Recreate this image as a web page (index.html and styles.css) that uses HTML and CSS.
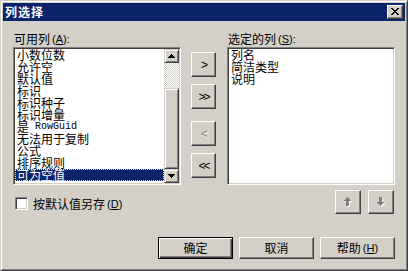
FILE: index.html
```html
<!DOCTYPE html>
<html lang="zh-CN">
<head>
    <meta charset="UTF-8">
    <title>列选择</title>
    <link rel="stylesheet" href="styles.css">
</head>
<body>
    <div class="window">
        <div class="titlebar">
            <span class="title">列选择</span>
            <button class="close-btn" aria-label="关闭">
                <svg width="8" height="7" viewBox="0 0 8 7" shape-rendering="crispEdges"><path d="M0 0h2v1H0zM6 0h2v1H6zM1 1h2v1H1zM5 1h2v1H5zM2 2h4v1H2zM3 3h2v1H3zM2 4h4v1H2zM1 5h2v1H1zM5 5h2v1H5zM0 6h2v1H0zM6 6h2v1H6z"/></svg>
            </button>
        </div>

        <div class="dialog-body">
            <div class="columns">
                <div class="list-col">
                    <div class="field-label">可用列<span class="mnemonic">(<u>A</u>):</span></div>
                    <div class="listbox">
                        <ul class="items">
                            <li>小数位数</li>
                            <li>允许空</li>
                            <li>默认值</li>
                            <li>标识</li>
                            <li>标识种子</li>
                            <li>标识增量</li>
                            <li><span>是</span><span class="latin">RowGuid</span></li>
                            <li>无法用于复制</li>
                            <li>公式</li>
                            <li>排序规则</li>
                            <li class="selected">可为空值</li>
                        </ul>
                        <div class="scrollbar">
                            <div class="sb-btn">
                                <svg width="7" height="4" viewBox="0 0 7 4" shape-rendering="crispEdges"><path d="M3 0h1v1h1v1h1v1h1v1H0V3h1V2h1V1h1z"/></svg>
                            </div>
                            <div class="sb-track"><div class="sb-thumb"></div></div>
                            <div class="sb-btn">
                                <svg width="7" height="4" viewBox="0 0 7 4" shape-rendering="crispEdges"><path d="M0 0h7v1H6v1H5v1H4v1H3V3H2V2H1V1H0z"/></svg>
                            </div>
                        </div>
                    </div>
                </div>

                <div class="move-col">
                    <button class="btn move">&gt;</button>
                    <button class="btn move">&gt;&gt;</button>
                    <button class="btn move" disabled>&lt;</button>
                    <button class="btn move">&lt;&lt;</button>
                </div>

                <div class="list-col">
                    <div class="field-label">选定的列<span class="mnemonic">(<u>S</u>):</span></div>
                    <div class="listbox">
                        <ul class="items">
                            <li>列名</li>
                            <li>简洁类型</li>
                            <li>说明</li>
                        </ul>
                    </div>
                </div>
            </div>

            <div class="options">
                <label class="check">
                    <span class="check-box"></span>
                    <span>按默认值另存</span><span class="mnemonic">(<u>D</u>)</span>
                </label>
                <div class="order-btns">
                    <button class="btn order" disabled>
                        <svg width="8" height="10" viewBox="0 0 8 10" shape-rendering="crispEdges">
                            <path fill="#fff" d="M4 1h1v1h1v1h1v1h1v1H6v5H3V5H1V4h1V3h1V2h1z"/>
                            <path fill="#808080" d="M3 0h1v1h1v1h1v1h1v1H5v5H2V4H0V3h1V2h1V1h1z"/>
                        </svg>
                    </button>
                    <button class="btn order" disabled>
                        <svg width="8" height="10" viewBox="0 0 8 10" shape-rendering="crispEdges">
                            <path fill="#fff" d="M3 1h3v5h2v1H7v1H6v1H5v1H4V9H3V8H2V7H1V6h2z"/>
                            <path fill="#808080" d="M2 0h3v5h2v1H6v1H5v1H4v1H3V8H2V7H1V6H0V5h2z"/>
                        </svg>
                    </button>
                </div>
            </div>

            <div class="footer">
                <button class="btn push default">确定</button>
                <button class="btn push">取消</button>
                <button class="btn push">帮助<span class="mnemonic">(<u>H</u>)</span></button>
            </div>
        </div>
    </div>
</body>
</html>
```

FILE: styles.css
```css
* {
    box-sizing: border-box;
}
body {
    margin: 0;
    font-family: "Noto Sans CJK SC", "Liberation Sans", sans-serif;
    font-size: 12px;
    line-height: 12px;
    color: #000;
    background: #d4d0c8;
}
.window {
    width: 408px;
    height: 271px;
    padding: 2px;
    background: #d4d0c8;
    border: 1px solid;
    border-color: #d4d0c8 #404040 #404040 #d4d0c8;
    box-shadow: inset 1px 1px #fff, inset -1px -1px #808080;
    display: flex;
    flex-direction: column;
}
.titlebar {
    height: 18px;
    padding: 0 2px;
    background: #0a246a;
    display: flex;
    align-items: center;
    justify-content: space-between;
}
.title {
    color: #fff;
    font-weight: bold;
    letter-spacing: 1px;
}
.close-btn {
    width: 16px;
    height: 14px;
    padding: 0 1px 1px 0;
    background: #d4d0c8;
    border: 1px solid;
    border-color: #fff #404040 #404040 #fff;
    box-shadow: inset -1px -1px #808080;
    display: flex;
    align-items: center;
    justify-content: center;
}
.dialog-body {
    flex: 1;
    display: flex;
    flex-direction: column;
}
.columns {
    display: flex;
    padding: 12px 10px 0 10px;
}
.list-col {
    width: 168px;
}
.field-label {
    height: 12px;
    margin-bottom: 2px;
    padding-left: 1px;
    display: flex;
    align-items: center;
    white-space: nowrap;
}
.mnemonic {
    font-family: "Liberation Sans", sans-serif;
    font-size: 11px;
    line-height: 12px;
    margin-left: 2px;
}
.listbox {
    height: 138px;
    padding: 1px;
    background: #fff;
    border: 1px solid;
    border-color: #808080 #fff #fff #808080;
    box-shadow: inset 1px 1px #404040, inset -1px -1px #d4d0c8;
    display: flex;
}
.items {
    flex: 1;
    margin: 0;
    padding: 0;
    list-style: none;
}
.items li {
    height: 12px;
    padding-left: 2px;
    display: flex;
    align-items: center;
    white-space: nowrap;
}
.items li.selected {
    background: #0a246a;
    color: #fff;
    outline: 1px dotted #f5db95;
    outline-offset: -1px;
}
.latin {
    margin-left: 6px;
    font-family: "Liberation Mono", monospace;
    font-size: 10px;
    line-height: 12px;
}
.scrollbar {
    width: 15px;
    display: flex;
    flex-direction: column;
}
.sb-btn,
.sb-thumb {
    background: #d4d0c8;
    border: 1px solid;
    border-color: #d4d0c8 #404040 #404040 #d4d0c8;
    box-shadow: inset 1px 1px #fff, inset -1px -1px #808080;
}
.sb-btn {
    height: 14px;
    display: flex;
    align-items: center;
    justify-content: center;
}
.sb-track {
    flex: 1;
    padding-top: 25px;
    display: flex;
    flex-direction: column;
    background: repeating-conic-gradient(#d4d0c8 0 25%, #fff 0 50%) 0 0 / 2px 2px;
}
.sb-thumb {
    flex: 1;
}
.btn {
    padding: 0;
    font: inherit;
    color: #000;
    background: #d4d0c8;
    border: 1px solid;
    border-color: #fff #404040 #404040 #fff;
    box-shadow: inset -1px -1px #808080;
    display: flex;
    align-items: center;
    justify-content: center;
}
.btn:disabled {
    color: #808080;
    text-shadow: 1px 1px #fff;
}
.move-col {
    width: 25px;
    margin: 0 11px 0 10px;
    padding-top: 19px;
    display: flex;
    flex-direction: column;
}
.move {
    height: 25px;
    font-family: "Liberation Sans", sans-serif;
    font-size: 12px;
    letter-spacing: -2px;
    margin-bottom: 7px;
}
.move:nth-child(2) {
    margin-bottom: 12px;
}
.options {
    height: 24px;
    margin-top: 5px;
    padding: 0 11px;
    display: flex;
    justify-content: space-between;
}
.check {
    height: 13px;
    margin-top: 7px;
    padding-left: 1px;
    display: flex;
    align-items: center;
    white-space: nowrap;
}
.check-box {
    width: 13px;
    height: 13px;
    margin-right: 5px;
    background: #fff;
    border: 1px solid;
    border-color: #808080 #fff #fff #808080;
    box-shadow: inset 1px 1px #404040, inset -1px -1px #d4d0c8;
}
.order-btns {
    display: flex;
    gap: 7px;
}
.order {
    width: 26px;
    height: 24px;
}
.footer {
    margin-top: 23px;
    padding-right: 10px;
    display: flex;
    justify-content: flex-end;
    gap: 6px;
}
.push {
    width: 75px;
    height: 22px;
}
.push.default {
    border: 1px solid #000;
    box-shadow: inset 1px 1px #fff, inset -1px -1px #404040, inset -2px -2px #808080;
}
```
